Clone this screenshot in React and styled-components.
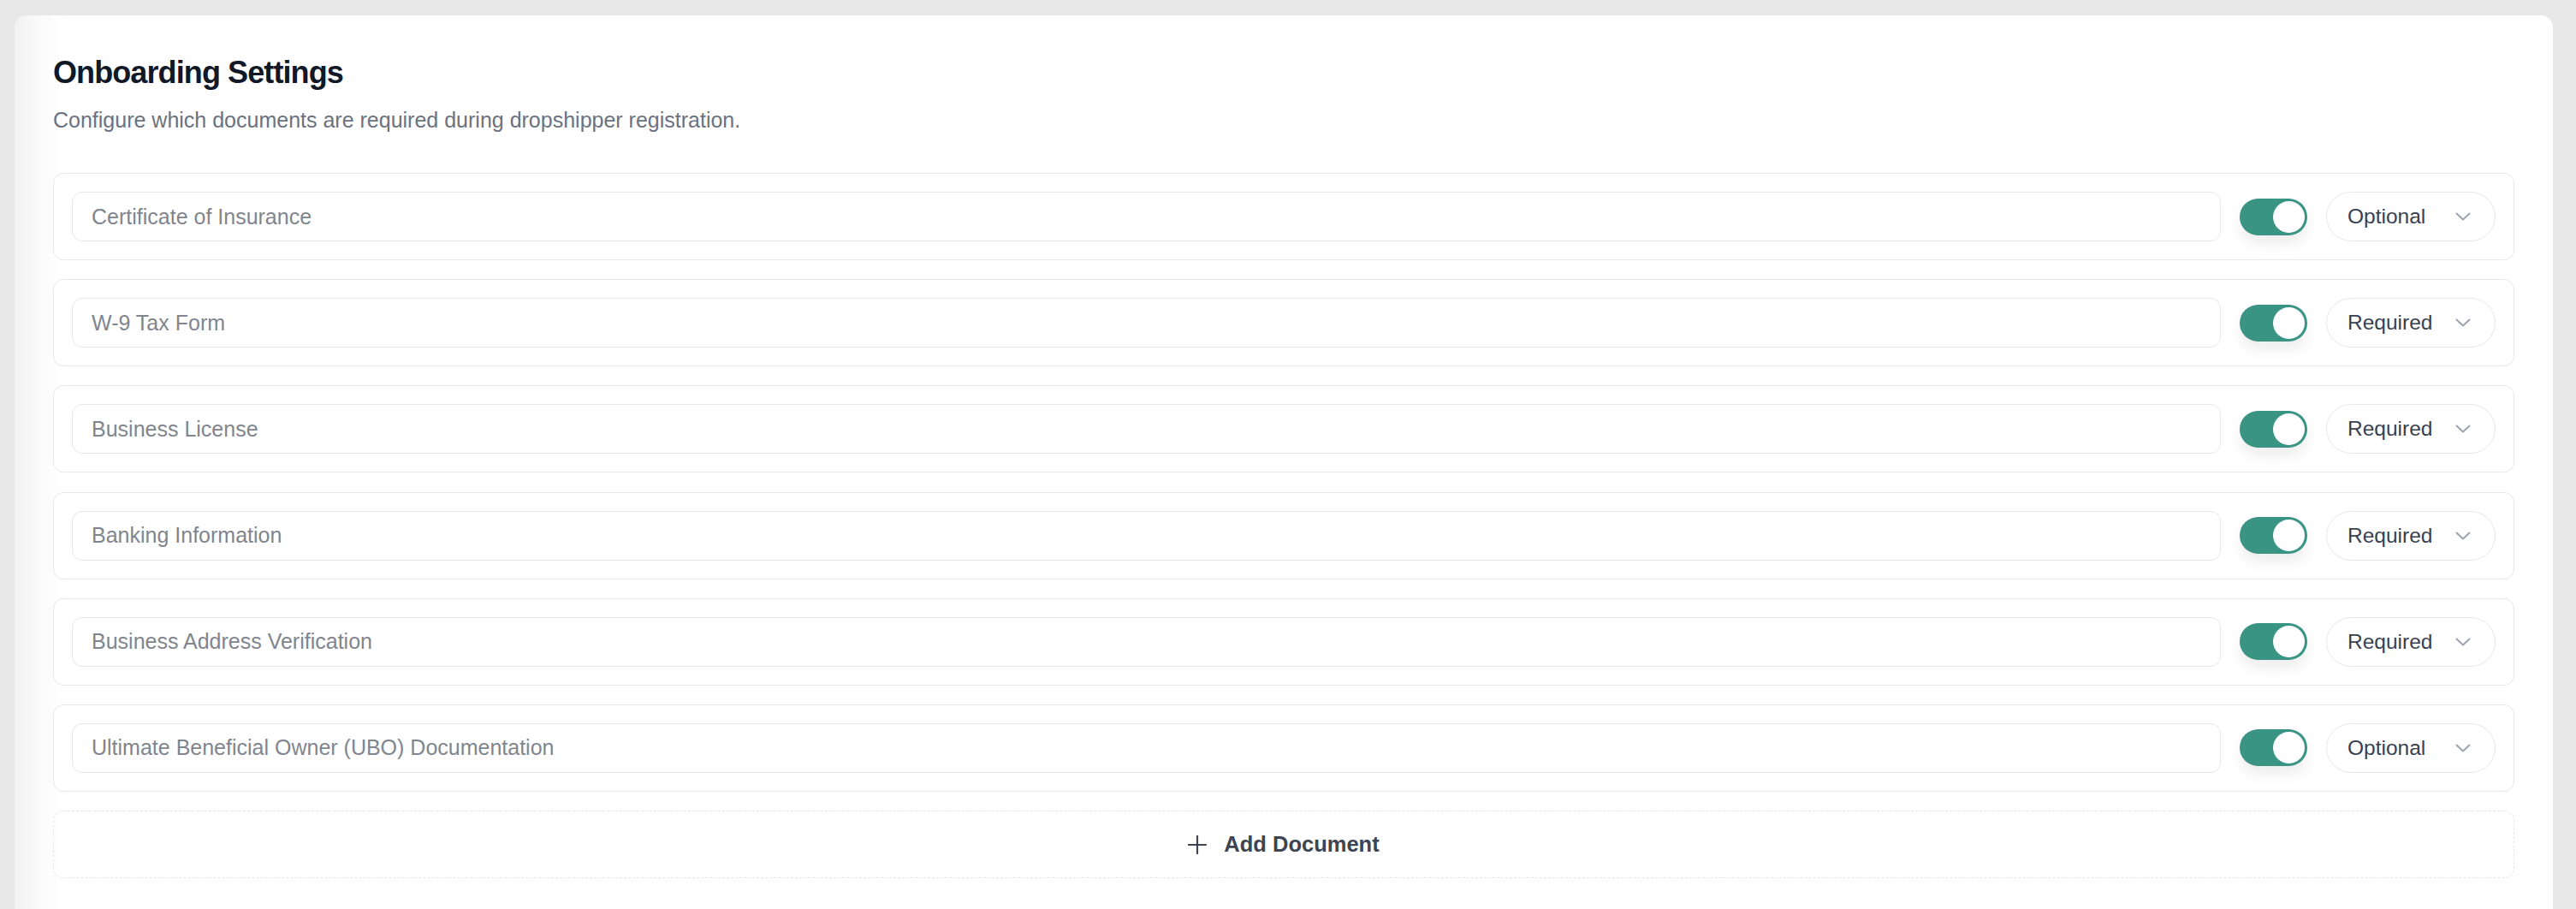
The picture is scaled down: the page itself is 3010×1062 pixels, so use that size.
import React from 'react'
import styled, { createGlobalStyle } from 'styled-components'

const documents = [
    { name: 'Certificate of Insurance', mode: 'Optional' },
    { name: 'W-9 Tax Form', mode: 'Required' },
    { name: 'Business License', mode: 'Required' },
    { name: 'Banking Information', mode: 'Required' },
    { name: 'Business Address Verification', mode: 'Required' },
    { name: 'Ultimate Beneficial Owner (UBO) Documentation', mode: 'Optional' },
]

function Chevron() {
    return (
        <svg width="18" height="10" viewBox="0 0 18 10" fill="none">
            <path d="M1.5 1.5L9 8.5L16.5 1.5" stroke="#9ca3af" strokeWidth="2" strokeLinecap="round" strokeLinejoin="round" />
        </svg>
    )
}

function Plus() {
    return (
        <svg width="22" height="22" viewBox="0 0 22 22" fill="none">
            <path d="M11 1V21M1 11H21" stroke="#3d4452" strokeWidth="2.2" strokeLinecap="round" />
        </svg>
    )
}

function App() {
    return (
        <Page>
            <GlobalStyle />
            <Card>
                <Title>Onboarding Settings</Title>
                <Subtitle>Configure which documents are required during dropshipper registration.</Subtitle>
                <List>
                    {documents.map((doc) => (
                        <Row key={doc.name}>
                            <NameInput defaultValue={doc.name} readOnly />
                            <Toggle role="switch" aria-checked="true" $on>
                                <Knob />
                            </Toggle>
                            <Select>
                                <span>{doc.mode}</span>
                                <Chevron />
                            </Select>
                        </Row>
                    ))}
                    <AddButton>
                        <Plus />
                        <span>Add Document</span>
                    </AddButton>
                </List>
            </Card>
        </Page>
    )
}

export default App

const GlobalStyle = createGlobalStyle`
body{
    margin: 0;
    background: #e8e8e8;
    font-family: "Liberation Sans", Arial, Helvetica, sans-serif;
}
`

const Page = styled.div`
padding: 18px 27px 0 17px;
min-height: 1044px;
overflow: hidden;
`

const Card = styled.div`
background: linear-gradient(to right, #f1f1f1 0, #fbfbfb 30px, #fff 60px);
border-radius: 14px;
padding: 45px 45px 60px 45px;
min-height: 1000px;
box-sizing: border-box;
`

const Title = styled.h2`
margin: 0;
font-size: 36px;
font-weight: 700;
letter-spacing: -0.9px;
line-height: 44px;
color: #111827;
`

const Subtitle = styled.p`
margin: 17px 0 0;
font-size: 25px;
line-height: 32px;
color: #6b7280;
`

const List = styled.div`
margin-top: 46px;
display: flex;
flex-direction: column;
gap: 22.2px;
`

const Row = styled.div`
display: flex;
align-items: center;
gap: 22px;
padding: 21px;
border: 1px solid #e6e8eb;
border-radius: 12px;
background: #fff;
`

const NameInput = styled.input`
flex: 1;
height: 58px;
box-sizing: border-box;
border: 1px solid #e6e8eb;
border-radius: 12px;
padding: 0 22px;
font-family: inherit;
font-size: 25px;
color: #80858e;
background: #fff;
outline: none;
`

const Toggle = styled.div`
width: 79px;
height: 43px;
border-radius: 22px;
background: ${(p) => (p.$on ? '#3a9483' : '#d1d5db')};
display: flex;
align-items: center;
justify-content: ${(p) => (p.$on ? 'flex-end' : 'flex-start')};
padding: 0 3px;
box-sizing: border-box;
box-shadow: 0 10px 16px rgba(0, 0, 0, 0.07);
flex-shrink: 0;
`

const Knob = styled.div`
width: 37px;
height: 37px;
border-radius: 50%;
background: #fff;
`

const Select = styled.div`
width: 198px;
height: 58px;
box-sizing: border-box;
border: 1px solid #e6e8eb;
border-radius: 29px;
padding: 0 28px 0 24px;
display: flex;
align-items: center;
justify-content: space-between;
font-size: 24.5px;
color: #374151;
flex-shrink: 0;
background: #fff;
`

const AddButton = styled.div`
height: 79px;
box-sizing: border-box;
border: 1px dashed #e3e6ea;
border-radius: 12px;
display: flex;
align-items: center;
justify-content: center;
gap: 20px;
font-size: 25.5px;
font-weight: 700;
color: #3d4452;
`
